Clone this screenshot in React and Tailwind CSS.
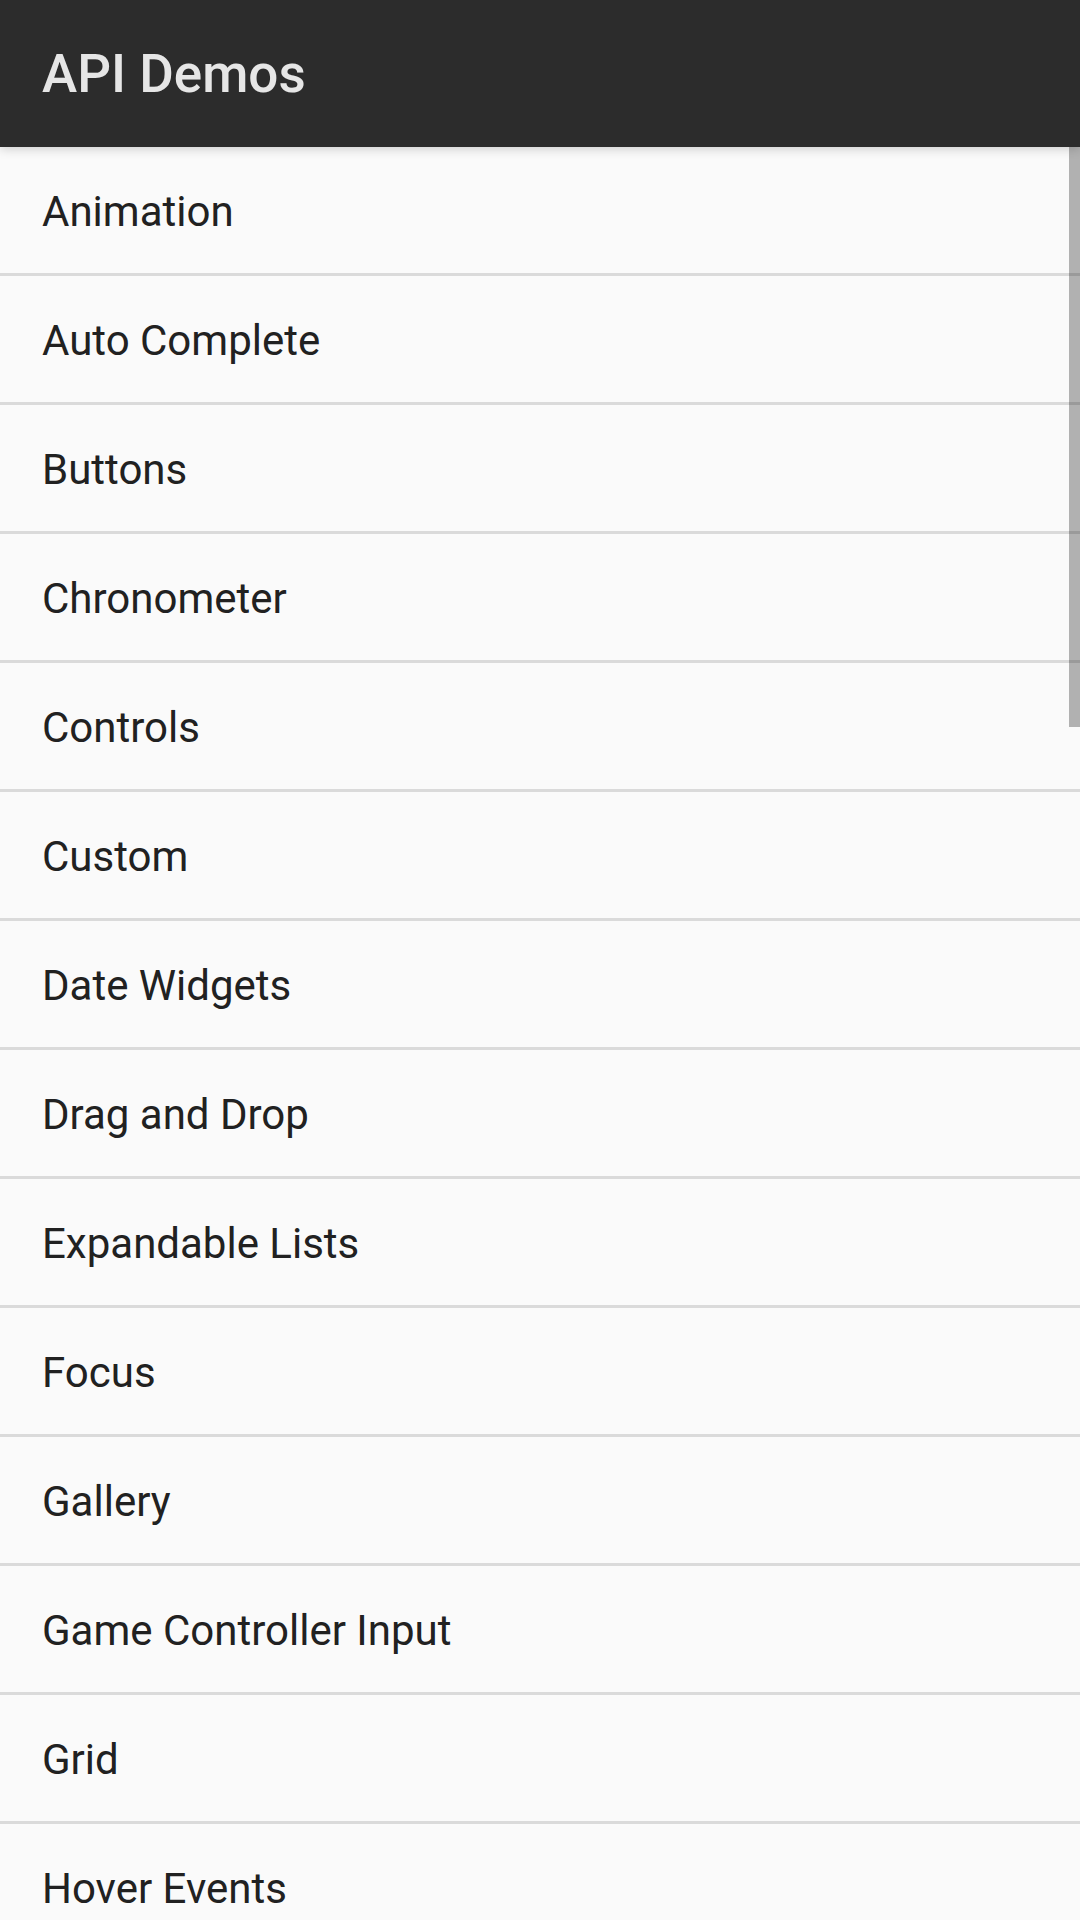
const demos = [
  "Animation",
  "Auto Complete",
  "Buttons",
  "Chronometer",
  "Controls",
  "Custom",
  "Date Widgets",
  "Drag and Drop",
  "Expandable Lists",
  "Focus",
  "Gallery",
  "Game Controller Input",
  "Grid",
  "Hover Events",
  "ImageButton",
];

const App = () => {
  return (
    <div className="w-[1080px] h-[1920px] overflow-hidden bg-[#fafafa] font-['Roboto',sans-serif]">
      {/* Toolbar */}
      <div className="relative z-10 h-[147px] bg-[#2c2c2c] flex items-center pl-[42px] pt-[2px] shadow-[0_2px_10px_rgba(0,0,0,0.18)]">
        <h1 className="text-[53px] font-medium text-[#e6e6e6] leading-none">API Demos</h1>
      </div>

      {/* List */}
      <div className="relative">
        {demos.map((name) => (
          <div
            key={name}
            className="h-[129px] border-b-[3px] border-[#dadada] flex items-center pl-[42px] pt-[3px]"
          >
            <span className="text-[42px] text-[#212121] leading-none">{name}</span>
          </div>
        ))}

        {/* Scrollbar */}
        <div className="absolute top-0 right-0 w-[11px] h-[580px] bg-[rgba(0,0,0,0.29)]" />
      </div>
    </div>
  );
};

export default App;
